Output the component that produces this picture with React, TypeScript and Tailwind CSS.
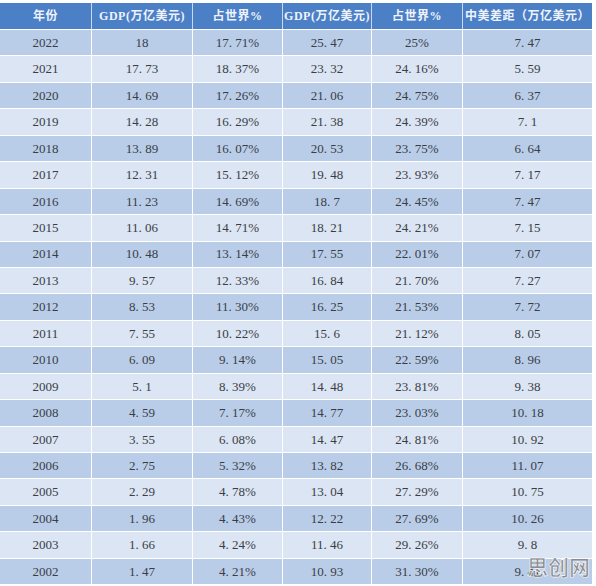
import React from "react";

const rows: string[][] = [
  ["2022", "18", "17.71%", "25.47", "25%", "7.47"],
  ["2021", "17.73", "18.37%", "23.32", "24.16%", "5.59"],
  ["2020", "14.69", "17.26%", "21.06", "24.75%", "6.37"],
  ["2019", "14.28", "16.29%", "21.38", "24.39%", "7.1"],
  ["2018", "13.89", "16.07%", "20.53", "23.75%", "6.64"],
  ["2017", "12.31", "15.12%", "19.48", "23.93%", "7.17"],
  ["2016", "11.23", "14.69%", "18.7", "24.45%", "7.47"],
  ["2015", "11.06", "14.71%", "18.21", "24.21%", "7.15"],
  ["2014", "10.48", "13.14%", "17.55", "22.01%", "7.07"],
  ["2013", "9.57", "12.33%", "16.84", "21.70%", "7.27"],
  ["2012", "8.53", "11.30%", "16.25", "21.53%", "7.72"],
  ["2011", "7.55", "10.22%", "15.6", "21.12%", "8.05"],
  ["2010", "6.09", "9.14%", "15.05", "22.59%", "8.96"],
  ["2009", "5.1", "8.39%", "14.48", "23.81%", "9.38"],
  ["2008", "4.59", "7.17%", "14.77", "23.03%", "10.18"],
  ["2007", "3.55", "6.08%", "14.47", "24.81%", "10.92"],
  ["2006", "2.75", "5.32%", "13.82", "26.68%", "11.07"],
  ["2005", "2.29", "4.78%", "13.04", "27.29%", "10.75"],
  ["2004", "1.96", "4.43%", "12.22", "27.69%", "10.26"],
  ["2003", "1.66", "4.24%", "11.46", "29.26%", "9.8"],
  ["2002", "1.47", "4.21%", "10.93", "31.30%", "9.41"],
];

const headers = ["年份", "GDP(万亿美元)", "占世界%", "GDP(万亿美元)", "占世界%", "中美差距（万亿美元）"];

const fmt = (s: string) => s.replace(".", ". ");

export default function App() {
  return (
    <div
      className="relative w-[596px] h-[586px] bg-white overflow-hidden"
      style={{ fontFamily: '"Liberation Serif", "Noto Sans CJK SC", serif' }}
    >
      <div className="pt-[3px] w-[592px]">
        <div className="grid grid-cols-[92px_101px_90px_89px_91px_129px] h-[26px] bg-[#4b7fc6]">
          {headers.map((h, i) => (
            <div
              key={i}
              className="flex items-center justify-center border-r border-[#c9d8ee] last:border-r-0 text-[12px] text-[#eef3fb] font-bold tracking-[0.5px]"
            >
              {h}
            </div>
          ))}
        </div>
        {rows.map((r, ri) => (
          <div
            key={ri}
            className={
              "grid grid-cols-[92px_101px_90px_89px_91px_129px] h-[26.45px] border-t border-white " +
              (ri % 2 === 0 ? "bg-[#b9cde9]" : "bg-[#dbe5f3]")
            }
          >
            {r.map((c, ci) => (
              <div
                key={ci}
                className="flex items-center justify-center border-r border-white last:border-r-0 text-[13px] text-[#3a3d45]"
              >
                {fmt(c)}
              </div>
            ))}
          </div>
        ))}
      </div>
      <div
        className="absolute left-[527px] top-[556px] text-[21px] font-bold leading-none text-[#8a8d93] tracking-[0px]"
        style={{ fontFamily: '"Noto Sans CJK SC", sans-serif', WebkitTextStroke: "0.6px #ffffff" }}
      >
        思创网
      </div>
    </div>
  );
}
